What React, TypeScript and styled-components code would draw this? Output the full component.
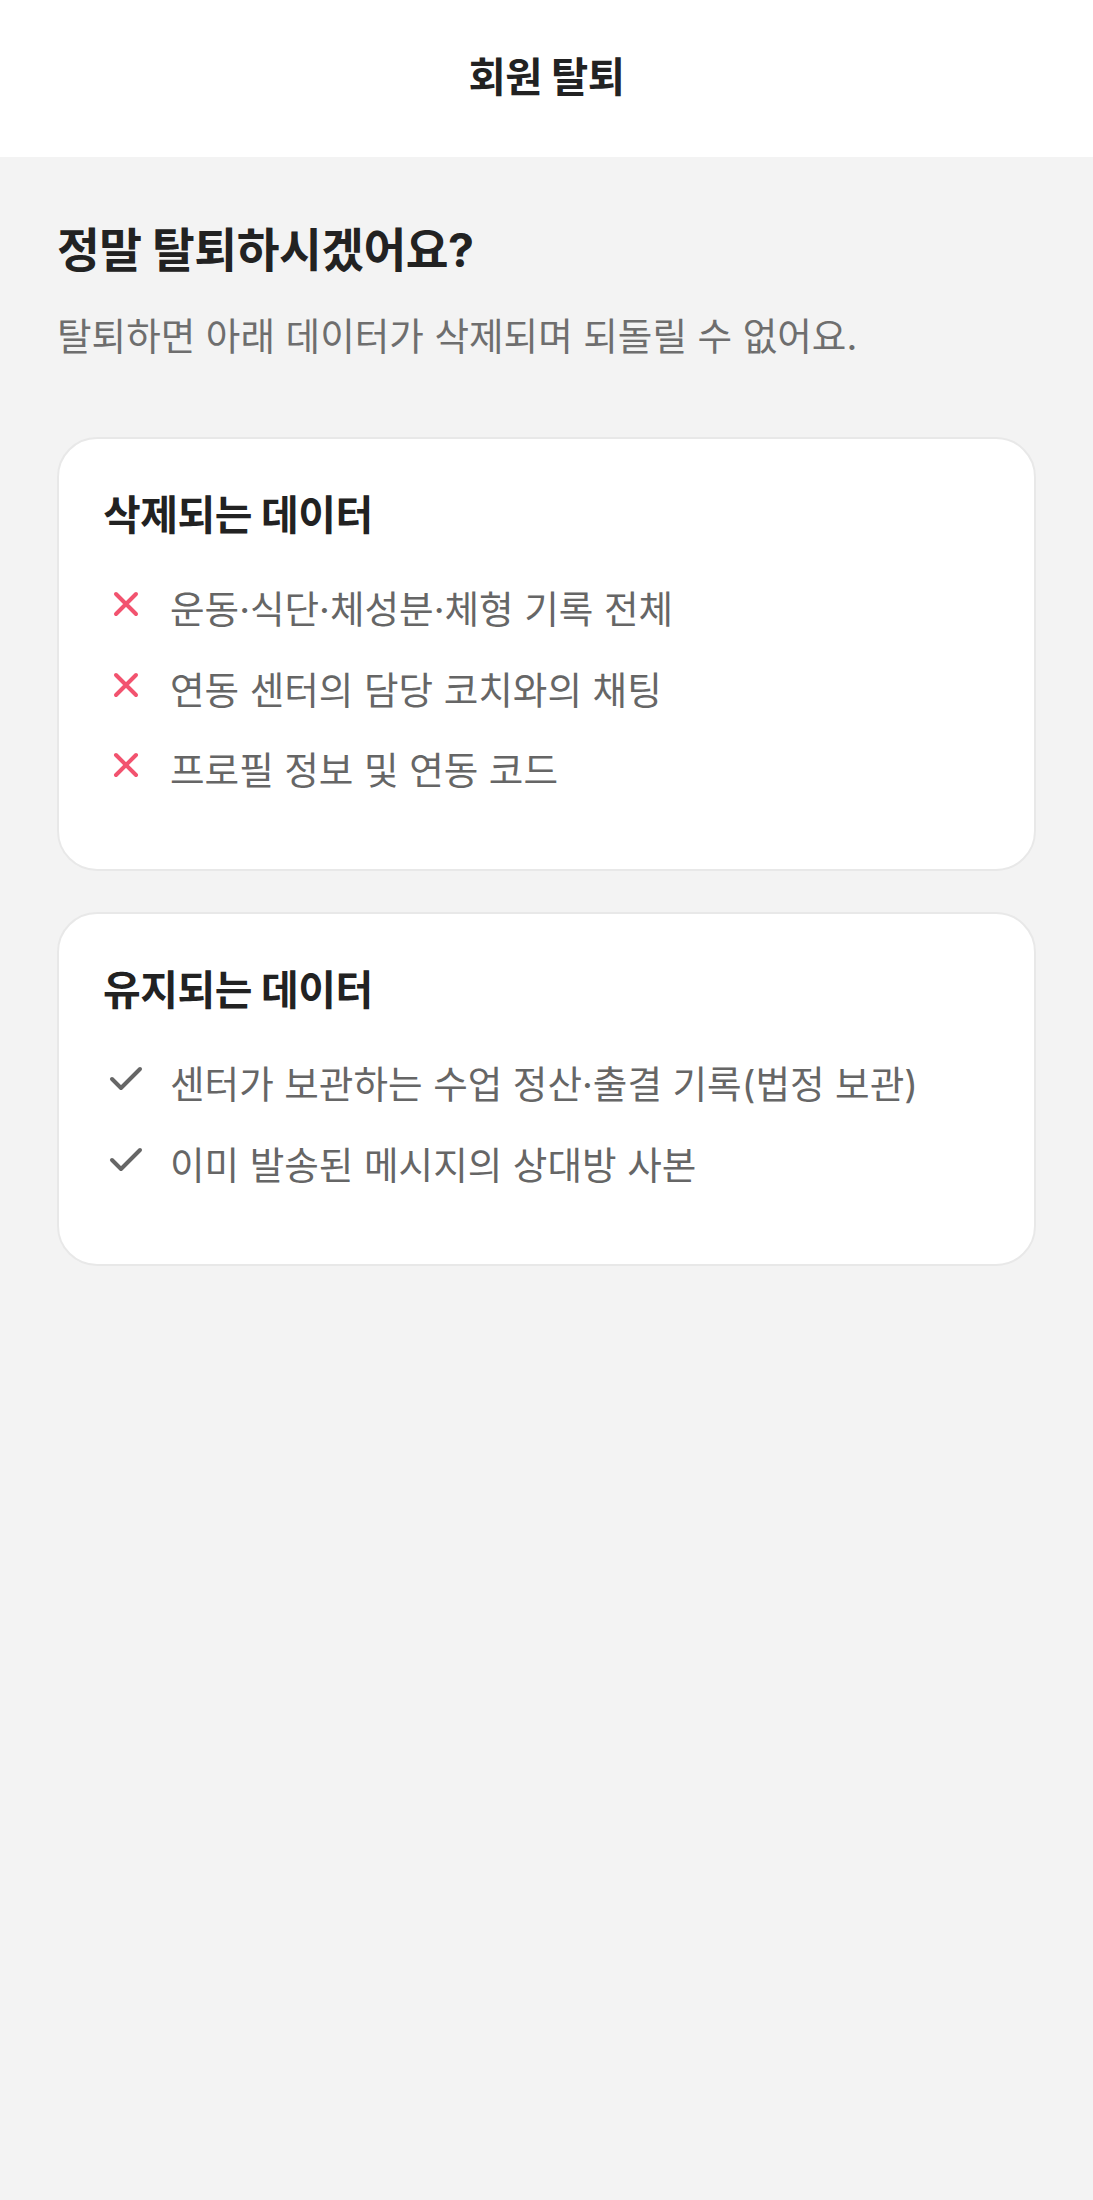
import React from "react";
import styled, { createGlobalStyle } from "styled-components";

const GlobalStyle = createGlobalStyle`
  html, body {
    margin: 0;
    padding: 0;
    background: #f3f3f3;
  }
  body {
    font-family: Inter, "Noto Sans CJK KR", "Noto Sans", sans-serif;
    -webkit-font-smoothing: antialiased;
  }
  * { box-sizing: border-box; }
`;

const Page = styled.div`
  min-height: 2200px;
  background: #f3f3f3;
  display: flex;
  flex-direction: column;
`;

const Header = styled.header`
  height: 157px;
  background: #ffffff;
  display: flex;
  align-items: center;
  justify-content: center;
`;

const HeaderTitle = styled.h1`
  margin: 0;
  font-size: 40.5px;
  font-weight: 700;
  color: #222222;
  letter-spacing: -0.5px;
  line-height: 1;
`;

const Main = styled.main`
  padding: 63px 57px 0 57px;
  display: flex;
  flex-direction: column;
`;

const Heading = styled.h2`
  margin: 0;
  font-size: 46.5px;
  line-height: 60px;
  font-weight: 700;
  color: #222222;
  letter-spacing: -0.5px;
`;

const Subtitle = styled.p`
  margin: 31px 0 0 0;
  font-size: 37.6px;
  line-height: 52px;
  font-weight: 400;
  color: #6e6e6e;
  letter-spacing: 0;
`;

const Cards = styled.div`
  margin-top: 74px;
  display: flex;
  flex-direction: column;
  gap: 41px;
`;

const Card = styled.section`
  background: #ffffff;
  border: 2px solid #e8e8e8;
  border-radius: 40px;
  padding: 50px 44px 72px 44px;
`;

const CardTitle = styled.h3`
  margin: 0;
  font-size: 41px;
  line-height: 53px;
  font-weight: 700;
  color: #222222;
  letter-spacing: -0.5px;
`;

const List = styled.ul`
  list-style: none;
  margin: 42px 0 0 0;
  padding: 0;
  display: flex;
  flex-direction: column;
  gap: 28.5px;
`;

const Item = styled.li`
  display: flex;
  align-items: flex-start;
  font-size: 37.6px;
  line-height: 52px;
  color: #666666;
  letter-spacing: 0;
`;

const IconBox = styled.span<{ $offset: number }>`
  flex: 0 0 46px;
  height: 52px;
  display: flex;
  justify-content: center;
  align-items: flex-start;
  padding-top: ${(p) => p.$offset}px;
  margin-right: 21px;
`;

const XIcon = () => (
  <svg width="26" height="26" viewBox="0 0 26 26" fill="none">
    <path
      d="M3 3 L23 23 M23 3 L3 23"
      stroke="#f2536f"
      strokeWidth="4"
      strokeLinecap="round"
    />
  </svg>
);

const CheckIcon = () => (
  <svg width="34" height="26" viewBox="0 0 34 26" fill="none">
    <path
      d="M3 13 L12 22 L31 3"
      stroke="#666666"
      strokeWidth="4"
      strokeLinecap="round"
      strokeLinejoin="round"
    />
  </svg>
);

type Kind = "remove" | "keep";

const sections: { title: string; kind: Kind; items: string[] }[] = [
  {
    title: "삭제되는 데이터",
    kind: "remove",
    items: [
      "운동·식단·체성분·체형 기록 전체",
      "연동 센터의 담당 코치와의 채팅",
      "프로필 정보 및 연동 코드",
    ],
  },
  {
    title: "유지되는 데이터",
    kind: "keep",
    items: [
      "센터가 보관하는 수업 정산·출결 기록(법정 보관)",
      "이미 발송된 메시지의 상대방 사본",
    ],
  },
];

export default function App() {
  return (
    <>
      <GlobalStyle />
      <Page>
        <Header>
          <HeaderTitle>회원 탈퇴</HeaderTitle>
        </Header>
        <Main>
          <Heading>정말 탈퇴하시겠어요?</Heading>
          <Subtitle>탈퇴하면 아래 데이터가 삭제되며 되돌릴 수 없어요.</Subtitle>
          <Cards>
            {sections.map((s) => (
              <Card key={s.title}>
                <CardTitle>{s.title}</CardTitle>
                <List>
                  {s.items.map((it) => (
                    <Item key={it}>
                      <IconBox $offset={7}>
                        {s.kind === "remove" ? <XIcon /> : <CheckIcon />}
                      </IconBox>
                      <span>{it}</span>
                    </Item>
                  ))}
                </List>
              </Card>
            ))}
          </Cards>
        </Main>
      </Page>
    </>
  );
}
